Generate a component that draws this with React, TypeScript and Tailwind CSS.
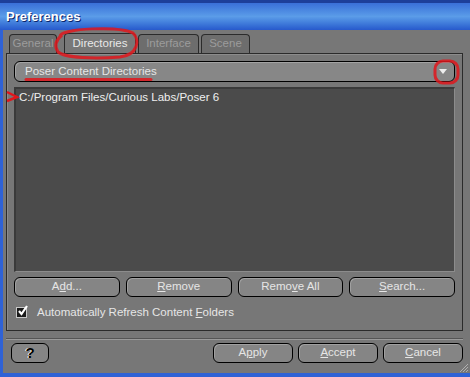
import React from 'react';

const font = { fontFamily: '"Liberation Sans", Arial, sans-serif' };

function Btn({ children, className = '' }: { children: React.ReactNode; className?: string }) {
  return (
    <div
      className={`h-[20px] flex items-center justify-center rounded-[6px] border border-black bg-[#858585] text-[11.5px] text-[#e6e6e6] shadow-[inset_1px_1px_0_#a0a0a0] ${className}`}
    >
      {children}
    </div>
  );
}

function Tab({ label, active, className = '' }: { label: string; active?: boolean; className?: string }) {
  return (
    <div
      className={`h-[19px] flex items-center justify-center rounded-t-[4px] border border-b-0 border-[#2b2b2b] text-[11.5px] ${
        active ? 'bg-[#787878] text-[#e8e8e8] h-[20px]' : 'bg-[#6d6d6d] text-[#9c9c9c]'
      } ${className}`}
    >
      {label}
    </div>
  );
}

export default function App() {
  return (
    <div className="relative w-[470px] h-[377px] flex flex-col bg-[#2f62d6] overflow-hidden" style={font}>
      {/* title bar */}
      <div className="h-[30px] flex items-center pl-[6px] bg-gradient-to-b from-[#3a6fd8] via-[#5b9ce8] to-[#2859cc] border-t-[3px] border-[#1d3f9a]">
        <span className="text-white font-bold text-[13px] [text-shadow:1px_1px_0_#0a246a]">Preferences</span>
      </div>

      {/* body */}
      <div className="flex-1 ml-[3px] mb-[4px] bg-[#777777] flex flex-col px-[3px] pt-[3px]">
        {/* tabs */}
        <div className="flex items-end h-[20px] pl-[3px]">
          <Tab label="General" className="w-[48px]" />
          <Tab label="Directories" active className="w-[72px] ml-[7px]" />
          <Tab label="Interface" className="w-[61px] ml-[2px]" />
          <Tab label="Scene" className="w-[49px] ml-[2px]" />
        </div>

        {/* panel */}
        <div className="w-[457px] h-[278px] border border-[#2b2b2b] shadow-[inset_1px_1px_0_#8c8c8c] px-[7px] pt-[7px] flex flex-col">
          <div className="h-[21px] flex items-center justify-between rounded-[6px] border border-black bg-[#878787] shadow-[inset_1px_1px_0_#a3a3a3] pl-[10px] pr-[7px]">
            <span className="text-[11.5px] text-[#e6e6e6]">Poser Content Directories</span>
            <span className="w-0 h-0 border-l-[4px] border-r-[4px] border-t-[5px] border-l-transparent border-r-transparent border-t-[#eeeeee]" />
          </div>

          <div className="mt-[5px] h-[185px] bg-[#4b4b4b] border-t-[2px] border-l-[2px] border-[#3a3a3a] border-r border-b border-r-[#8c8c8c] border-b-[#8c8c8c] pl-[3px] pt-[1px]">
            <div className="text-[11.5px] text-[#efefef] leading-[14px]">C:/Program Files/Curious Labs/Poser 6</div>
          </div>

          <div className="mt-[5px] grid grid-cols-4 gap-[6px]">
            <Btn>A<span className="underline">d</span>d...</Btn>
            <Btn><span className="underline">R</span>emove</Btn>
            <Btn>Remo<span className="underline">v</span>e All</Btn>
            <Btn><span className="underline">S</span>earch...</Btn>
          </div>

          <div className="mt-[7px] flex items-center pl-[2px]">
            <div className="relative w-[11px] h-[11px] bg-[#1a1a1a] border border-[#c8c8c8]">
              <svg className="absolute -top-[3px] left-0" width="12" height="12" viewBox="0 0 12 12">
                <path d="M2 6 L4.5 9 L10 1" stroke="#ffffff" strokeWidth="2.2" fill="none" />
              </svg>
            </div>
            <span className="ml-[10px] text-[11.5px] text-[#e6e6e6]">
              Automatically Refresh Content <span className="underline">F</span>olders
            </span>
          </div>
        </div>

        {/* separator */}
        <div className="mt-[7px] mr-[4px] h-[2px] border-t border-[#555555] border-b border-b-[#9a9a9a]" />

        {/* bottom buttons */}
        <div className="mt-[3px] flex items-center pl-[5px] pr-[4px]">
          <div className="w-[38px] h-[20px] flex items-center justify-center rounded-[6px] border border-black bg-[#858585]">
            <span className="text-[15px] font-bold text-black [text-shadow:-1px_0_0_#ffffff]">?</span>
          </div>
          <div className="flex-1" />
          <Btn className="w-[80px]">A<span className="underline">p</span>ply</Btn>
          <Btn className="w-[80px] ml-[5px]"><span className="underline">A</span>ccept</Btn>
          <Btn className="w-[80px] ml-[5px]"><span className="underline">C</span>ancel</Btn>
        </div>
      </div>

      {/* resize grip */}
      <svg className="absolute right-[1px] bottom-[4px]" width="11" height="11" viewBox="0 0 11 11">
        <path d="M10 2 L2 10 M10 5 L5 10 M10 8 L8 10" stroke="#b0b0b0" strokeWidth="1" />
      </svg>

      {/* red annotations */}
      <svg className="absolute inset-0 pointer-events-none" width="470" height="377" viewBox="0 0 470 377">
        <g stroke="#e0161c" fill="none" strokeOpacity="0.85">
          <path d="M60 36 C 62 28, 120 26, 133 33 C 140 40, 138 55, 120 57 C 95 59, 65 58, 58 52 C 54 46, 56 40, 62 35" strokeWidth="3" />
          <path d="M26 79.5 L151 79.5" strokeWidth="3" strokeLinecap="round" />
          <rect x="435" y="61" width="23" height="22" rx="8" strokeWidth="3" />
        </g>
        <path d="M7 92 L17 97 L7 101" stroke="#e0161c" strokeWidth="2.5" fill="none" />
      </svg>
    </div>
  );
}
